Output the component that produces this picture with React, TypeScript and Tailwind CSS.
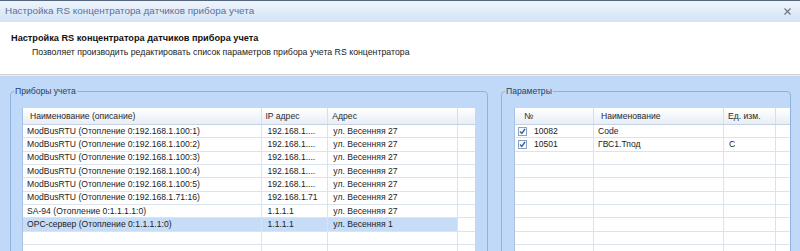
import React from 'react';

type Col = { w: number; hp: number; rp: number };

const leftCols: Col[] = [
  { w: 240, hp: 7, rp: 4 },
  { w: 66, hp: 3, rp: 5 },
  { w: 130, hp: 4, rp: 5 },
  { w: 17, hp: 0, rp: 0 },
];

const rightCols: Col[] = [
  { w: 79, hp: 9, rp: 3 },
  { w: 130, hp: 7, rp: 4 },
  { w: 52, hp: 4, rp: 5 },
  { w: 14, hp: 0, rp: 0 },
];

const devices = [
  ['ModBusRTU (Отопление 0:192.168.1.100:1)', '192.168.1....', 'ул. Весенняя 27'],
  ['ModBusRTU (Отопление 0:192.168.1.100:2)', '192.168.1....', 'ул. Весенняя 27'],
  ['ModBusRTU (Отопление 0:192.168.1.100:3)', '192.168.1....', 'ул. Весенняя 27'],
  ['ModBusRTU (Отопление 0:192.168.1.100:4)', '192.168.1....', 'ул. Весенняя 27'],
  ['ModBusRTU (Отопление 0:192.168.1.100:5)', '192.168.1....', 'ул. Весенняя 27'],
  ['ModBusRTU (Отопление 0:192.168.1.71:16)', '192.168.1.71', 'ул. Весенняя 27'],
  ['SA-94 (Отопление 0:1.1.1.1:0)', '1.1.1.1', 'ул. Весенняя 27'],
  ['OPC-сервер (Отопление 0:1.1.1.1:0)', '1.1.1.1', 'ул. Весенняя 1'],
];

const params = [
  ['10082', 'Code', ''],
  ['10501', 'ГВС1.Тпод', 'С'],
];

function Check() {
  return (
    <span className="w-[9px] h-[9px] border border-[#8aa3c4] bg-gradient-to-b from-[#f4f6f9] to-white flex items-center justify-center shrink-0">
      <svg width="7" height="7" viewBox="0 0 7 7">
        <path d="M1 3.5 L2.8 5.5 L6 1" fill="none" stroke="#3d5f95" strokeWidth="1.3" />
      </svg>
    </span>
  );
}

function Header({ cols, labels }: { cols: Col[]; labels: string[] }) {
  return (
    <div className="flex h-[17px] border-b border-[#c3d2e5] bg-gradient-to-b from-white to-[#e8eef7] text-[#2a2a2a]">
      {cols.map((c, i) => (
        <div
          key={i}
          style={{ width: c.w, paddingLeft: c.hp }}
          className="h-full flex items-center border-r border-[#d6e0ec] last:border-r-0 whitespace-nowrap"
        >
          {labels[i]}
        </div>
      ))}
    </div>
  );
}

function Row({ cols, cells, selected }: { cols: Col[]; cells: React.ReactNode[]; selected?: boolean }) {
  return (
    <div className="flex h-[13.33px] border-b border-[#dbe3ee] text-[#1c1c1c]">
      {cols.map((c, i) => (
        <div
          key={i}
          style={{ width: c.w, paddingLeft: c.rp }}
          className={`h-full flex items-center gap-[7px] border-r border-[#dbe3ee] last:border-r-0 whitespace-nowrap overflow-hidden ${
            selected && i < cols.length - 1 ? 'bg-[#c6dcf7]' : 'bg-white'
          }`}
        >
          {cells[i]}
        </div>
      ))}
    </div>
  );
}

function GroupBox({ title, width, children }: { title: string; width: number; children: React.ReactNode }) {
  return (
    <fieldset style={{ width }} className="shrink-0 h-[200px] border border-[#8fb1dd] rounded-[4px] p-0 m-0">
      <legend className="ml-[3px] px-[1px] leading-[10px] text-[#263f63]">{title}</legend>
      {children}
    </fieldset>
  );
}

export default function App() {
  return (
    <div className="w-[800px] h-[251px] overflow-hidden flex flex-col font-['Liberation_Sans',Arial,sans-serif] text-[8.6px]">
      <div className="h-[22px] shrink-0 border-t border-[#55667c] bg-gradient-to-b from-[#eef4fc] to-[#d4e3f5] flex items-center justify-between pl-[5px] pr-[8px]">
        <span className="text-[9.9px] text-[#57729a]">Настройка RS концентратора датчиков прибора учета</span>
        <svg width="7" height="7" viewBox="0 0 7 7" className="mr-[1px]">
          <path d="M0.5 0.5 L6.5 6.5 M6.5 0.5 L0.5 6.5" stroke="#6f7884" strokeWidth="1.3" />
        </svg>
      </div>

      <div className="h-[53px] shrink-0 bg-white border-b border-[#d3d3d3] pl-[11px] pt-[11px] leading-[11px] text-[#111]">
        <div className="font-bold text-[9.2px]">Настройка RS концентратора датчиков прибора учета</div>
        <div className="pl-[21px] mt-[3px] text-[8.75px] text-[#222]">
          Позволяет производить редактировать список параметров прибора учета RS концентратора
        </div>
      </div>

      <div className="flex-1 bg-[#c0d9f8] border-t border-[#e6f0fc] flex gap-[13px] pl-[10px] pt-[10px]">
        <GroupBox title="Приборы учета" width={478}>
          <div className="ml-[11px] mt-[12px] w-[453px] border-l border-[#a9c2e2]">
            <Header cols={leftCols} labels={['Наименование (описание)', 'IP адрес', 'Адрес', '']} />
            {devices.map((d, i) => (
              <Row key={i} cols={leftCols} cells={[d[0], d[1], d[2], '']} selected={i === devices.length - 1} />
            ))}
            {[0, 1, 2, 3].map((i) => (
              <Row key={'e' + i} cols={leftCols} cells={['', '', '', '']} />
            ))}
          </div>
        </GroupBox>

        <GroupBox title="Параметры" width={290}>
          <div className="ml-[12px] mt-[12px] w-[276px] border-l border-[#a9c2e2]">
            <Header cols={rightCols} labels={['№', 'Наименование', 'Ед. изм.', '']} />
            {params.map((p, i) => (
              <Row
                key={i}
                cols={rightCols}
                cells={[
                  <>
                    <Check />
                    <span>{p[0]}</span>
                  </>,
                  p[1],
                  p[2],
                  '',
                ]}
              />
            ))}
            {[0, 1, 2, 3, 4, 5, 6, 7, 8, 9].map((i) => (
              <Row key={'e' + i} cols={rightCols} cells={['', '', '', '']} />
            ))}
          </div>
        </GroupBox>
      </div>
    </div>
  );
}
